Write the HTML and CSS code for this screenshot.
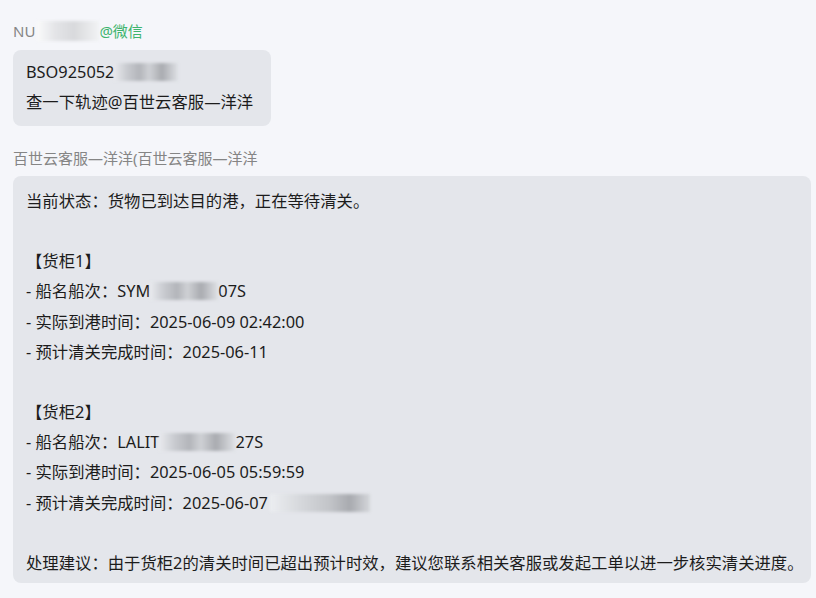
FILE: index.html
```html
<!DOCTYPE html>
<html lang="zh-CN">
<head>
    <meta charset="UTF-8">
    <meta name="viewport" content="width=device-width, initial-scale=1.0">
    <title>聊天记录</title>
    <link rel="stylesheet" href="styles.css">
</head>
<body>
    <div class="chat">
        <!-- Customer message -->
        <div class="message">
            <div class="sender">NU<span class="mosaic mosaic-name"></span><span class="source">@微信</span></div>
            <div class="bubble bubble-short">
                <div class="line">BSO925052<span class="mosaic mosaic-code"></span></div>
                <div class="line">查一下轨迹@百世云客服—洋洋</div>
            </div>
        </div>

        <!-- Bot reply -->
        <div class="message">
            <div class="sender">百世云客服—洋洋(百世云客服—洋洋</div>
            <div class="bubble bubble-wide">
                <div class="line">当前状态：货物已到达目的港，正在等待清关。</div>
                <div class="line blank"></div>
                <div class="line">【货柜1】</div>
                <div class="line">- 船名船次：SYM<span class="mosaic mosaic-ship1"></span>07S</div>
                <div class="line">- 实际到港时间：2025-06-09 02:42:00</div>
                <div class="line">- 预计清关完成时间：2025-06-11</div>
                <div class="line blank"></div>
                <div class="line">【货柜2】</div>
                <div class="line">- 船名船次：LALIT<span class="mosaic mosaic-ship2"></span>27S</div>
                <div class="line">- 实际到港时间：2025-06-05 05:59:59</div>
                <div class="line">- 预计清关完成时间：2025-06-07<span class="mosaic mosaic-time"></span></div>
                <div class="line blank"></div>
                <div class="line">处理建议：由于货柜2的清关时间已超出预计时效，建议您联系相关客服或发起工单以进一步核实清关进度。</div>
            </div>
        </div>
    </div>
</body>
</html>
```

FILE: styles.css
```css
body {
    margin: 0;
    padding: 0;
    background-color: #f5f6fa;
    font-family: "Noto Sans", "Noto Sans CJK SC", sans-serif;
    color: #1c1c1c;
}
.chat {
    padding: 21px 5px 0 13px;
}
.message {
    margin-bottom: 22px;
}
.sender {
    font-size: 15px;
    line-height: 20px;
    height: 20px;
    color: #858585;
    margin-bottom: 9px;
    white-space: nowrap;
}
.message + .message .sender {
    margin-bottom: 8px;
}
.source {
    color: #3db46d;
}
.bubble {
    background-color: #e4e6eb;
    border-radius: 8px;
    font-size: 16.35px;
}
.bubble-short {
    display: inline-block;
    padding: 7px 18px 9px 13px;
}
.bubble-wide {
    padding: 10px 13px 5px 13px;
}
.line {
    line-height: 30px;
    height: 30px;
    white-space: nowrap;
}
.bubble-wide .line {
    line-height: 30.17px;
    height: 30.17px;
}
.mosaic {
    display: inline-block;
    height: 18px;
    vertical-align: -3px;
    background: linear-gradient(90deg, #e9eaee 0%, #c9cbd0 20%, #b3b5ba 40%, #cfd1d5 55%, #a9abb0 75%, #dfe1e5 100%);
    filter: blur(1.5px);
}
.mosaic-name {
    width: 62px;
    height: 20px;
    margin-left: 2px;
    vertical-align: -4px;
    background: linear-gradient(90deg, #fafafa 0%, #e3e4e7 30%, #d8d9dc 60%, #f1f2f4 100%);
}
.mosaic-code {
    width: 64px;
}
.mosaic-ship1 {
    width: 68px;
}
.mosaic-ship2 {
    width: 76px;
}
.mosaic-time {
    width: 100px;
    margin-left: 2px;
    background: linear-gradient(90deg, #eceef1 0%, #d6d8dc 30%, #c2c4c8 60%, #a8aaaf 80%, #d5d7db 100%);
}
```
